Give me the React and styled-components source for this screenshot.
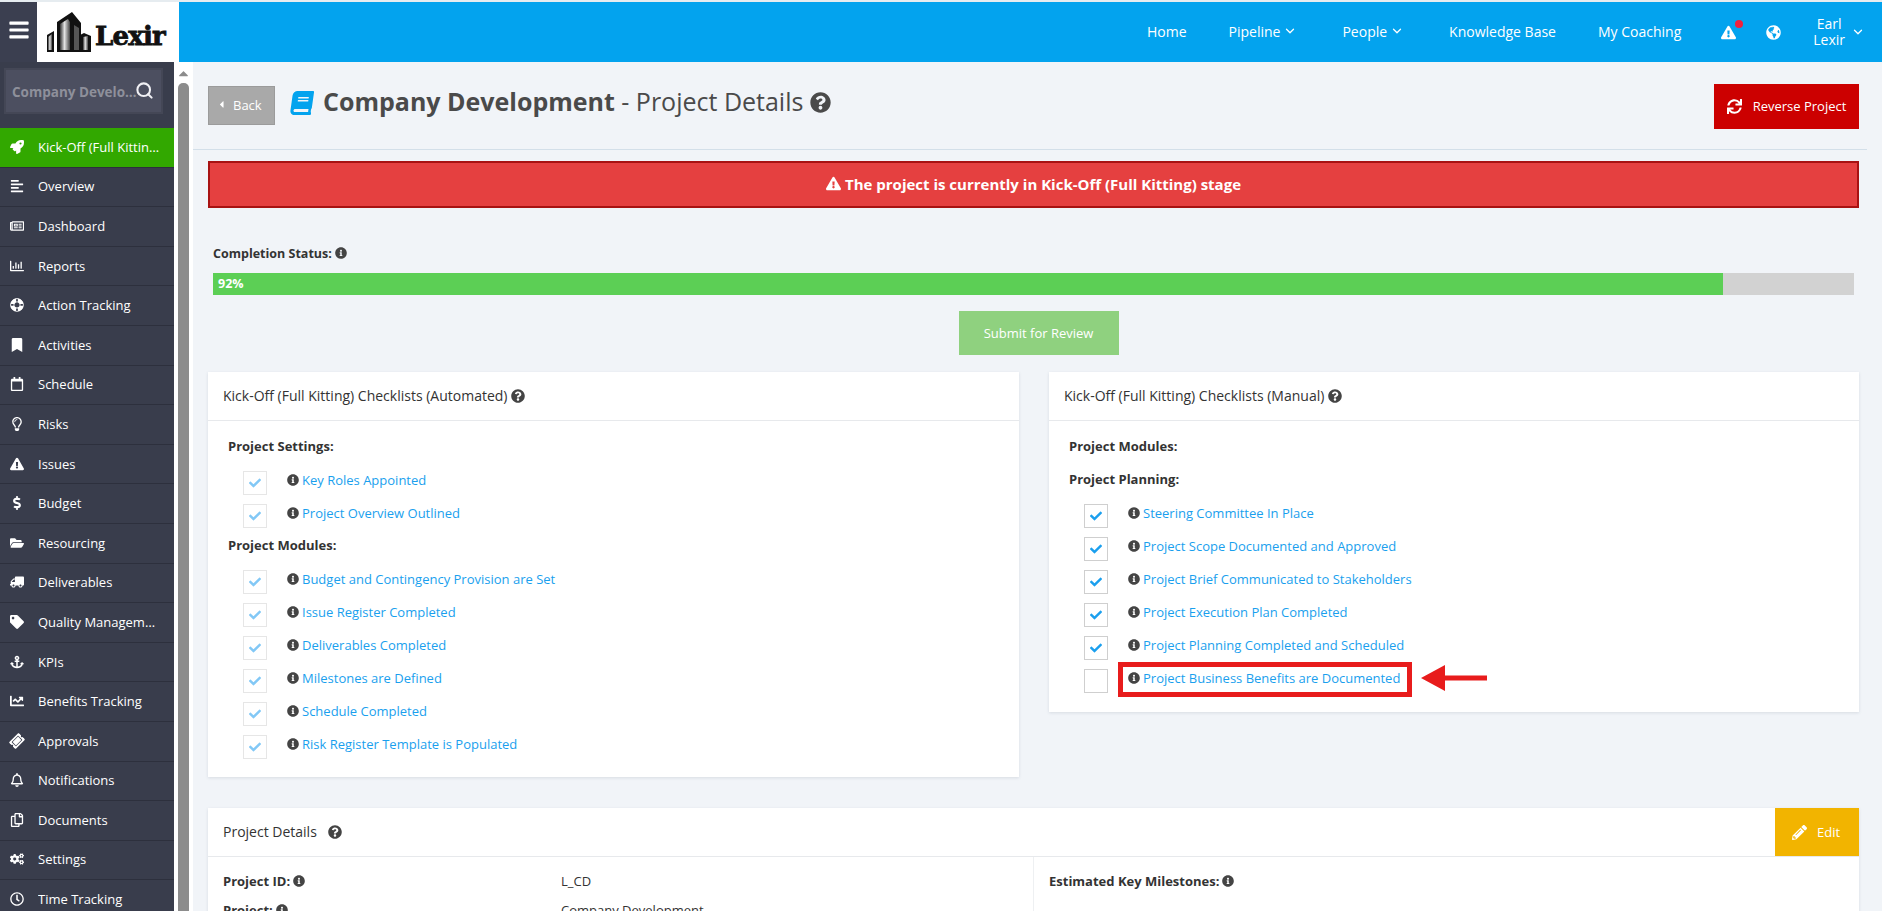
import React from 'react';
import styled, { createGlobalStyle } from 'styled-components';
import {
  FaRocket, FaAlignLeft, FaRegNewspaper, FaRegChartBar, FaLifeRing, FaBookmark, FaRegCalendar, FaRegLightbulb,
  FaExclamationTriangle, FaDollarSign, FaFolderOpen, FaTruck, FaTag, FaAnchor, FaChartLine, FaTicketAlt, FaRegBell,
  FaRegCopy, FaCogs, FaRegClock, FaGlobeAmericas, FaSync, FaPencilAlt, FaBook, FaQuestionCircle, FaInfoCircle,
  FaCheck, FaCaretLeft, FaCaretUp, FaBars,
} from 'react-icons/fa';
import { Search, ChevronDown } from 'lucide-react';

const Global = createGlobalStyle`
  html, body { margin: 0; padding: 0; height: 100%; overflow: hidden; background: #fff; }
  body { font-family: "Open Sans", "Liberation Sans", sans-serif; font-size: 13px; color: #333; }
  * { box-sizing: border-box; }
`;

const Page = styled.div`
  width: 1882px; height: 911px; overflow: hidden; display: flex; flex-direction: column;
  padding-top: 2px; background: #e6ecf0;
`;
const Header = styled.header`display: flex; height: 60px; flex: none; background: #03a3ee;`;
const Burger = styled.div`
  width: 37px; background: #3b3f50; color: #fff; display: flex; justify-content: center; align-items: flex-start;
  padding-top: 17px; font-size: 22px;
`;
const LogoBox = styled.div`
  width: 142px; background: #fff; display: flex; align-items: center; padding-left: 9px; gap: 3px;
`;
const LogoText = styled.span`
  font-family: "DejaVu Serif", serif; font-weight: 700; font-size: 26px; letter-spacing: -0.8px; color: #111;
  line-height: 1; margin-top: 8px; -webkit-text-stroke: 0.8px #111;
`;
const Nav = styled.nav`flex: 1; display: flex; justify-content: flex-end; align-items: center; color: #fff; font-size: 14px; padding-right: 17px;`;
const NavItem = styled.span`
  display: inline-flex; align-items: center; gap: 3px; padding: 0 ${p => p.$pad || 21}px; white-space: nowrap; margin-top: -2px;
`;
const CoachingItem = styled(NavItem)`padding-right: 25px;`;
const NavIcon = styled.span`position: relative; display: inline-flex; font-size: 15px; padding: 0 15px;`;
const Dot = styled.i`position: absolute; width: 8px; height: 8px; border-radius: 50%; background: #f01f3c; right: 8px; top: -5px;`;
const UserName = styled.span`display: inline-flex; align-items: center; gap: 6px; padding-left: 17px; line-height: 16px; text-align: center;`;
const Chevron = styled(ChevronDown)`width: 14px; height: 14px; stroke-width: 2.2; flex: none;`;

const Body = styled.div`flex: 1; display: flex; min-height: 0; background: #fff;`;
const Sidebar = styled.aside`width: 174px; flex: none; background: #393d4c; display: flex; flex-direction: column;`;
const SearchWrap = styled.div`height: 66px; padding: 6px 11px 0 4px; flex: none;`;
const SearchBox = styled.div`
  height: 46px; background: #4c4f60; border: 2px solid #444756; color: #8e909b; font-weight: 700; font-size: 13.5px;
  display: flex; align-items: center; padding: 2px 7px 0 6px; white-space: nowrap;
  svg { flex: none; color: #f0f0f4; margin: -4px 0 0 -4px; }
`;
const SearchText = styled.span`flex: 1; min-width: 0; overflow: hidden; text-overflow: ellipsis;`;
const Item = styled.div`
  height: 39.6px; flex: none; display: flex; align-items: center; color: #fff; font-size: 13px; padding-left: 9px;
  background: ${p => p.$active ? '#32a800' : 'transparent'}; border-bottom: 1px solid #2d303d; padding-bottom: 1px;
`;
const ItemIcon = styled.span`
  width: 15px; flex: none; display: flex; justify-content: center; font-size: 14px; margin-right: 14px;
  svg { transform: ${p => p.$t || 'none'}; }
`;
const ItemLabel = styled.span`white-space: nowrap; overflow: hidden; text-overflow: ellipsis; width: 124px;`;

const ScrollTrack = styled.div`
  width: 19px; flex: none; padding: 4px 4px 0 4px; display: flex; flex-direction: column; align-items: center; color: #8c8c8c;
  font-size: 15px;
`;
const ScrollThumb = styled.div`width: 11px; flex: 1; margin-top: 2px; background: #8c8c8c; border-radius: 5px 5px 0 0;`;

const Main = styled.main`flex: 1; min-width: 0; background: #f1f4f8; overflow: hidden; padding: 0 23px 0 15px;`;
const TitleRow = styled.div`
  height: 88px; display: flex; align-items: flex-start; padding-top: 24px; border-bottom: 1px solid #d3dfe9; margin: 0 -8px 0 -15px; padding-left: 15px; padding-right: 8px;
`;
const BackButton = styled.div`
  width: 67px; height: 39px; background: #a9a9a9; border: 1px solid #9b9b9b; color: #fff; font-size: 13px; display: flex; align-items: center;
  padding: 0 0 2px 7px; gap: 6px; svg { font-size: 11px; }
`;
const BookIcon = styled.span`color: #03a3ee; font-size: 24px; margin: 5px 0 0 15px; display: flex; transform: skewX(-8deg);`;
const Title = styled.h1`
  margin: -1px 0 0 9px; font-weight: 400; font-size: 25px; color: #4a4a4a; line-height: 33px; flex: 1; white-space: nowrap;
  strong { font-weight: 700; }
  svg { font-size: 21px; vertical-align: -2px; }
`;
const ReverseButton = styled.div`
  width: 145px; height: 45px; background: #cc0000; color: #fff; font-size: 13px; display: flex; align-items: center; justify-content: center; gap: 11px;
  margin-top: -2px; padding-bottom: 1px; svg { font-size: 15px; }
`;
const Banner = styled.div`
  margin-top: 11px; height: 47px; background: #e54040; border: 2px solid #a81212; color: #fff; font-weight: 700; font-size: 15px;
  display: flex; align-items: center; justify-content: center; gap: 4px; padding-bottom: 2px;
`;
const StatusBlock = styled.div`padding: 37px 5px 0;`;
const StatusLabel = styled.div`font-weight: 700; font-size: 12.5px; color: #333; line-height: 18px; svg { font-size: 12px; vertical-align: -1px; color: #444; }`;
const Track = styled.div`height: 22px; margin-top: 10px; background: #d2d2d2;`;
const Fill = styled.div`height: 100%; background: #5ccf55; color: #fff; font-weight: 700; font-size: 12.5px; line-height: 22px; padding-left: 5px;`;
const SubmitRow = styled.div`display: flex; justify-content: center; margin-top: 16px; padding-left: 10px;`;
const Submit = styled.div`width: 160px; height: 44px; background: #8fd17f; color: #fff; font-size: 13px; display: flex; align-items: center; justify-content: center;`;
const Columns = styled.div`display: flex; align-items: flex-start; gap: 30px; margin-top: 17px;`;
const Panel = styled.section`
  background: #fff; box-shadow: 0 1px 3px rgba(60,80,100,.14); flex: ${p => p.$flex || 'none'}; width: ${p => p.$w ? p.$w + 'px' : 'auto'};
  height: ${p => p.$h ? p.$h + 'px' : 'auto'}; margin-top: ${p => p.$mt || 0}px;
`;
const PanelHead = styled.div`
  height: 49px; border-bottom: 1px solid #e7e9ec; display: flex; align-items: center; justify-content: space-between; padding-left: 15px;
  font-size: 14px; color: #333;
`;
const PanelTitle = styled.span`margin-top: -2px;`;
const HeadIcon = styled.span`margin-left: ${p => p.$ml || 4}px; display: inline-flex; vertical-align: -2px; color: #444; font-size: 14px;`;
const PanelBody = styled.div`padding: 15px 20px 0 20px;`;
const GroupTitle = styled.div`font-weight: 700; font-size: 13px; color: #333; line-height: 18px; height: 33px; padding-top: 1px;`;
const Row = styled.div`height: 33px; display: flex; align-items: flex-start; padding-left: 15px; position: relative;`;
const Check = styled.span`
  width: 24px; height: 24px; flex: none; border: 1px solid ${p => p.$dim ? '#e6e6e6' : '#cfcfcf'}; display: flex; align-items: center; justify-content: center;
  color: ${p => p.$dim ? '#82c8f6' : '#1a9fee'}; font-size: 12px; background: #fff; margin-top: 2px;
`;
const RowText = styled.span`margin: 2px 0 0 20px; line-height: 18px; white-space: nowrap; font-size: 13px; position: relative;`;
const Info = styled(FaInfoCircle)`color: #444; font-size: 12px; vertical-align: -1px; margin-right: 3px;`;
const Link = styled.a`color: #1a9fee; text-decoration: none;`;
const Highlight = styled.span`position: absolute; left: -10px; top: -7px; width: 294px; height: 35px; border: 5px solid #e81c1c; pointer-events: none;`;
const ArrowMark = styled.svg`position: absolute; left: 292px; top: -5px;`;
const EditButton = styled.div`
  width: 84px; height: 48px; background: #f2b400; color: #fff; display: flex; align-items: center; justify-content: center; gap: 10px; font-size: 13px;
  align-self: flex-start; padding-right: 2px; svg { font-size: 15px; }
`;
const DetailGrid = styled.div`display: flex;`;
const DetailLeft = styled.div`width: 826px; padding: 14px 15px 0; border-right: 1px solid #eef0f2;`;
const DetailRow = styled.div`display: flex; height: 29px; line-height: 20px;`;
const DetailKey = styled.span`width: 338px; font-weight: 700; flex: none; svg { margin-left: 3px; }`;
const DetailRight = styled.div`flex: 1; padding: 14px 15px 0; font-weight: 700; line-height: 20px; svg { margin-left: 3px; }`;

const items = [
  [FaRocket, 'Kick-Off (Full Kitting) Stage', true],
  [FaAlignLeft, 'Overview'], [FaRegNewspaper, 'Dashboard'], [FaRegChartBar, 'Reports'], [FaLifeRing, 'Action Tracking', false, 'rotate(45deg)'],
  [FaBookmark, 'Activities'], [FaRegCalendar, 'Schedule'], [FaRegLightbulb, 'Risks'], [FaExclamationTriangle, 'Issues'],
  [FaDollarSign, 'Budget'], [FaFolderOpen, 'Resourcing'], [FaTruck, 'Deliverables', false, 'scaleX(-1)'], [FaTag, 'Quality Management'],
  [FaAnchor, 'KPIs'], [FaChartLine, 'Benefits Tracking'], [FaTicketAlt, 'Approvals', false, 'rotate(-45deg)'], [FaRegBell, 'Notifications'],
  [FaRegCopy, 'Documents'], [FaCogs, 'Settings'], [FaRegClock, 'Time Tracking'],
];

const ChecklistRow = ({ label, checked, dim, marked }) => (
  <Row>
    <Check $dim={dim}>{checked && <FaCheck />}</Check>
    <RowText>
      <Info /><Link>{label}</Link>
      {marked && <Highlight />}
      {marked && (
        <ArrowMark width="70" height="28" viewBox="0 0 70 28">
          <path d="M1 14 L25 1 L25 11.5 L67 11.5 L67 16.5 L25 16.5 L25 27 Z" fill="#e81c1c" />
        </ArrowMark>
      )}
    </RowText>
  </Row>
);

export default function App() {
  return (
    <Page>
      <Global />
      <Header>
        <Burger><FaBars /></Burger>
        <LogoBox>
          <svg width="46" height="44" viewBox="0 0 46 44">
            <defs>
              <linearGradient id="b" x1="0" x2="1"><stop offset="0" stopColor="#333" /><stop offset=".45" stopColor="#e2e2e2" /><stop offset="1" stopColor="#444" /></linearGradient>
            </defs>
            <path d="M1 42V25l7-4v21zM11 42V12l15-10 9 11v29z" fill="#111" />
            <path d="M14 40V14l8-5 2 3v28z" fill="url(#b)" />
            <path d="M28 40V15l5 3v22z" fill="#555" />
            <path d="M34 42V25l4-2 7 3v16z" fill="#111" />
            <path d="M37 40V27l5-1v14z" fill="url(#b)" />
            <path d="M2 40V27l4-3v16z" fill="url(#b)" />
          </svg>
          <LogoText>Lexir</LogoText>
        </LogoBox>
        <Nav>
          <NavItem>Home</NavItem>
          <NavItem>Pipeline <Chevron /></NavItem>
          <NavItem $pad={24}>People <Chevron /></NavItem>
          <NavItem>Knowledge Base</NavItem>
          <CoachingItem>My Coaching</CoachingItem>
          <NavIcon><FaExclamationTriangle /><Dot /></NavIcon>
          <NavIcon><FaGlobeAmericas /></NavIcon>
          <UserName><span>Earl<br />Lexir</span><Chevron /></UserName>
        </Nav>
      </Header>
      <Body>
        <Sidebar>
          <SearchWrap>
            <SearchBox><SearchText>Company Development</SearchText><Search size={19} strokeWidth={2.6} /></SearchBox>
          </SearchWrap>
          {items.map(([Icon, label, active, t]) => (
            <Item key={label} $active={active}>
              <ItemIcon $t={t}><Icon /></ItemIcon>
              <ItemLabel>{label}</ItemLabel>
            </Item>
          ))}
        </Sidebar>
        <ScrollTrack><FaCaretUp /><ScrollThumb /></ScrollTrack>
        <Main>
          <TitleRow>
            <BackButton><FaCaretLeft /> Back</BackButton>
            <BookIcon><FaBook /></BookIcon>
            <Title><strong>Company Development</strong> - Project Details <FaQuestionCircle /></Title>
            <ReverseButton><FaSync /> Reverse Project</ReverseButton>
          </TitleRow>
          <Banner><FaExclamationTriangle size={15} /> The project is currently in Kick-Off (Full Kitting) stage</Banner>
          <StatusBlock>
            <StatusLabel>Completion Status: <FaInfoCircle /></StatusLabel>
            <Track><Fill style={{ width: '92%' }}>92%</Fill></Track>
          </StatusBlock>
          <SubmitRow><Submit>Submit for Review</Submit></SubmitRow>
          <Columns>
            <Panel $w={811} $h={405}>
              <PanelHead><PanelTitle>Kick-Off (Full Kitting) Checklists (Automated)<HeadIcon><FaQuestionCircle /></HeadIcon></PanelTitle></PanelHead>
              <PanelBody>
                <GroupTitle>Project Settings:</GroupTitle>
                <ChecklistRow checked dim label="Key Roles Appointed" />
                <ChecklistRow checked dim label="Project Overview Outlined" />
                <GroupTitle>Project Modules:</GroupTitle>
                <ChecklistRow checked dim label="Budget and Contingency Provision are Set" />
                <ChecklistRow checked dim label="Issue Register Completed" />
                <ChecklistRow checked dim label="Deliverables Completed" />
                <ChecklistRow checked dim label="Milestones are Defined" />
                <ChecklistRow checked dim label="Schedule Completed" />
                <ChecklistRow checked dim label="Risk Register Template is Populated" />
              </PanelBody>
            </Panel>
            <Panel $flex="1" $h={340}>
              <PanelHead><PanelTitle>Kick-Off (Full Kitting) Checklists (Manual)<HeadIcon><FaQuestionCircle /></HeadIcon></PanelTitle></PanelHead>
              <PanelBody>
                <GroupTitle>Project Modules:</GroupTitle>
                <GroupTitle>Project Planning:</GroupTitle>
                <ChecklistRow checked label="Steering Committee In Place" />
                <ChecklistRow checked label="Project Scope Documented and Approved" />
                <ChecklistRow checked label="Project Brief Communicated to Stakeholders" />
                <ChecklistRow checked label="Project Execution Plan Completed" />
                <ChecklistRow checked label="Project Planning Completed and Scheduled" />
                <ChecklistRow marked label="Project Business Benefits are Documented" />
              </PanelBody>
            </Panel>
          </Columns>
          <Panel $mt={31}>
            <PanelHead>
              <PanelTitle>Project Details<HeadIcon $ml={11}><FaQuestionCircle /></HeadIcon></PanelTitle>
              <EditButton><FaPencilAlt /> Edit</EditButton>
            </PanelHead>
            <DetailGrid>
              <DetailLeft>
                <DetailRow><DetailKey>Project ID:<Info /></DetailKey><span>L_CD</span></DetailRow>
                <DetailRow><DetailKey>Project:<Info /></DetailKey><span>Company Development</span></DetailRow>
              </DetailLeft>
              <DetailRight>Estimated Key Milestones:<Info /></DetailRight>
            </DetailGrid>
          </Panel>
        </Main>
      </Body>
    </Page>
  );
}
